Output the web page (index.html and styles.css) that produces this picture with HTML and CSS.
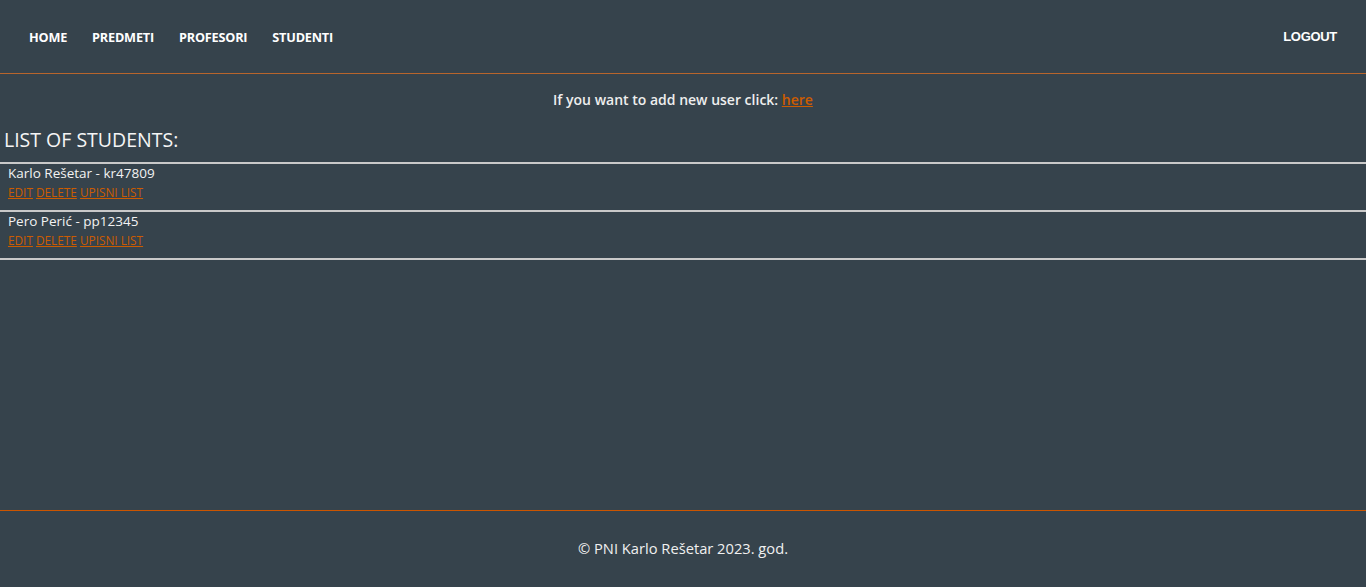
FILE: index.html
```html
<!DOCTYPE html>
<html lang="hr">
<head>
<meta charset="utf-8">
<title>Studenti</title>
<link rel="stylesheet" href="styles.css">
</head>
<body>
<div class="page">
  <header class="topbar">
    <nav class="nav">
      <a class="nav-link" href="#">HOME</a>
      <a class="nav-link" href="#">PREDMETI</a>
      <a class="nav-link" href="#">PROFESORI</a>
      <a class="nav-link" href="#">STUDENTI</a>
    </nav>
    <a class="logout" href="#">LOGOUT</a>
  </header>
  <main class="content">
    <p class="add-user">If you want to add new user click: <a href="#">here</a></p>
    <h2 class="title">LIST OF STUDENTS:</h2>
    <ul class="students">
      <li class="student">
        <div class="student-name">Karlo Rešetar - kr47809</div>
        <div class="actions"><a href="#">EDIT</a> <a href="#">DELETE</a> <a href="#">UPISNI LIST</a></div>
      </li>
      <li class="student">
        <div class="student-name">Pero Perić - pp12345</div>
        <div class="actions"><a href="#">EDIT</a> <a href="#">DELETE</a> <a href="#">UPISNI LIST</a></div>
      </li>
    </ul>
  </main>
  <footer class="footer">© PNI Karlo Rešetar 2023. god.</footer>
</div>
</body>
</html>
```
FILE: styles.css
```css
html, body {
  margin: 0;
  padding: 0;
  background: #36434c;
  color: #f2f2f2;
  font-family: "Open Sans", "Noto Sans", sans-serif;
}
.page {
  min-height: 587px;
  display: flex;
  flex-direction: column;
}
.topbar {
  height: 73px;
  border-bottom: 1px solid #b8652c;
  display: flex;
  align-items: center;
  justify-content: space-between;
  padding: 0 29px;
}
.nav {
  display: flex;
  gap: 25px;
}
.nav-link {
  color: #ffffff;
  text-decoration: none;
  font-size: 12.7px;
  font-weight: 700;
  letter-spacing: -0.2px;
}
.logout {
  color: #ffffff;
  text-decoration: none;
  font-family: "Liberation Sans", Arial, sans-serif;
  font-size: 13px;
  font-weight: 700;
  letter-spacing: -0.3px;
}
.content {
  flex: 1;
}
.add-user {
  margin: 16px 0 0;
  text-align: center;
  font-size: 14px;
  font-weight: 600;
  line-height: 20px;
  color: #eeeeee;
}
.add-user a {
  color: #cc5c00;
}
.title {
  margin: 18px 0 0 4px;
  font-size: 19.5px;
  font-weight: 500;
  line-height: 24px;
  color: #f5f5f5;
}
.students {
  list-style: none;
  margin: 10px 0 0;
  padding: 0;
  border-top: 2px solid #c9c9c9;
}
.student {
  border-bottom: 2px solid #c9c9c9;
  padding: 0 8px;
  height: 48px;
  box-sizing: border-box;
}
.student-name {
  font-size: 13.5px;
  line-height: 19px;
  color: #f2f2f2;
}
.actions {
  font-size: 11.8px;
  line-height: 19px;
}
.actions a {
  color: #cc5c00;
}
.footer {
  height: 77px;
  padding-bottom: 2px;
  border-top: 1px solid #cc5500;
  display: flex;
  align-items: center;
  justify-content: center;
  font-size: 14.7px;
  color: #f0f0f0;
  box-sizing: border-box;
}
```
